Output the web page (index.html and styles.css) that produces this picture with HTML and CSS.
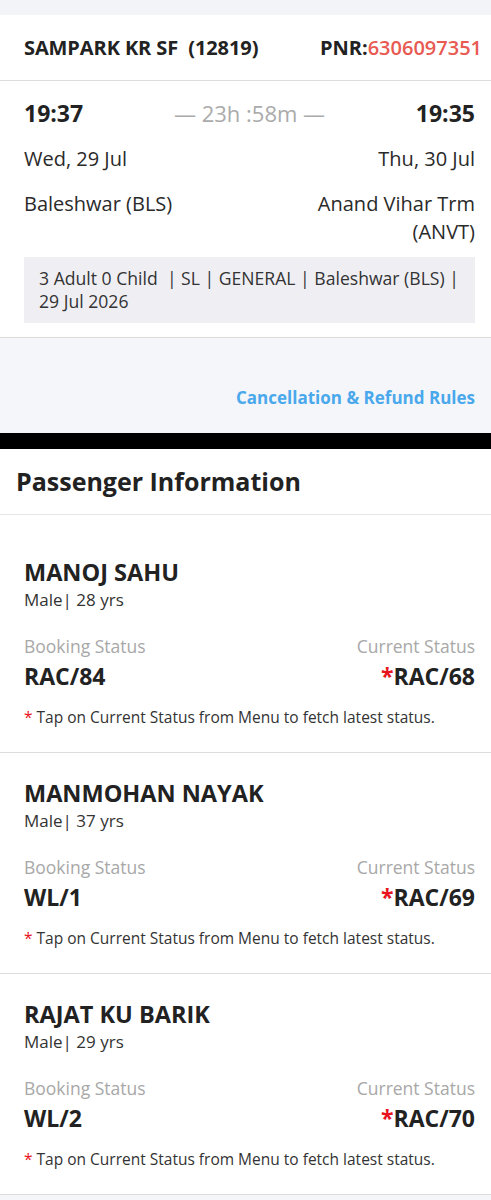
FILE: index.html
```html
<!DOCTYPE html>
<html>
<head>
<meta charset="utf-8">
<link rel="stylesheet" href="styles.css">
</head>
<body>
<div class="top-strip"></div>
<header class="train-head">
  <div class="train-name">SAMPARK KR SF&nbsp; (12819)</div>
  <div class="pnr">PNR:<span class="pnr-num">6306097351</span></div>
</header>
<section class="journey">
  <div class="row times">
    <div class="time">19:37</div>
    <div class="duration">— 23h :58m —</div>
    <div class="time">19:35</div>
  </div>
  <div class="row dates">
    <div>Wed, 29 Jul</div>
    <div class="right">Thu, 30 Jul</div>
  </div>
  <div class="row stations">
    <div>Baleshwar (BLS)</div>
    <div class="right">Anand Vihar Trm<br>(ANVT)</div>
  </div>
  <div class="summary">3 Adult 0 Child &nbsp;| SL | GENERAL | Baleshwar (BLS) | 29 Jul 2026</div>
</section>
<section class="rules">
  <a class="rules-link">Cancellation &amp; Refund Rules</a>
</section>
<div class="black-bar"></div>
<section class="passengers">
  <h2 class="pass-title">Passenger Information</h2>
  <div class="pass-list">
    <div class="pass">
      <div class="pname">MANOJ SAHU</div>
      <div class="pmeta">Male| 28 yrs</div>
      <div class="status-row">
        <div class="st">
          <div class="st-label">Booking Status</div>
          <div class="st-val">RAC/84</div>
        </div>
        <div class="st right">
          <div class="st-label">Current Status</div>
          <div class="st-val"><span class="star">*</span>RAC/68</div>
        </div>
      </div>
      <div class="note"><span class="star">*</span> Tap on Current Status from Menu to fetch latest status.</div>
    </div>
    <div class="pass">
      <div class="pname">MANMOHAN NAYAK</div>
      <div class="pmeta">Male| 37 yrs</div>
      <div class="status-row">
        <div class="st">
          <div class="st-label">Booking Status</div>
          <div class="st-val">WL/1</div>
        </div>
        <div class="st right">
          <div class="st-label">Current Status</div>
          <div class="st-val"><span class="star">*</span>RAC/69</div>
        </div>
      </div>
      <div class="note"><span class="star">*</span> Tap on Current Status from Menu to fetch latest status.</div>
    </div>
    <div class="pass">
      <div class="pname">RAJAT KU BARIK</div>
      <div class="pmeta">Male| 29 yrs</div>
      <div class="status-row">
        <div class="st">
          <div class="st-label">Booking Status</div>
          <div class="st-val">WL/2</div>
        </div>
        <div class="st right">
          <div class="st-label">Current Status</div>
          <div class="st-val"><span class="star">*</span>RAC/70</div>
        </div>
      </div>
      <div class="note"><span class="star">*</span> Tap on Current Status from Menu to fetch latest status.</div>
    </div>
  </div>
</section>
</body>
</html>
```

FILE: styles.css
```css
html, body {
  margin: 0;
  padding: 0;
}
body {
  background: #f5f6f9;
  font-family: "Open Sans", "Noto Sans", sans-serif;
  color: #222;
  width: 491px;
}
.top-strip {
  height: 15px;
  background: #f3f4f8;
}
.train-head {
  background: #fff;
  height: 66px;
  display: flex;
  align-items: center;
  justify-content: space-between;
  padding: 0 9px 0 24px;
  border-bottom: 1px solid #dcdcdc;
  box-sizing: border-box;
}
.train-name, .pnr {
  font-size: 20px;
  font-weight: 700;
  color: #222;
}
.train-name {
  letter-spacing: -0.1px;
}
.pnr-num {
  color: #e85a52;
  font-weight: 600;
}
.journey {
  background: #fff;
  padding: 17px 16px 14px 24px;
  border-bottom: 1px solid #dcdcdc;
}
.row {
  display: flex;
  justify-content: space-between;
  align-items: flex-start;
}
.right {
  text-align: right;
}
.times {
  align-items: baseline;
  line-height: 30px;
}
.time {
  font-size: 23px;
  font-weight: 700;
  color: #222;
}
.duration {
  font-size: 22px;
  color: #ababab;
}
.dates {
  margin-top: 17px;
  font-size: 20px;
  line-height: 28px;
  color: #2a2a2a;
}
.stations {
  margin-top: 17px;
  font-size: 20px;
  line-height: 28px;
  color: #2a2a2a;
}
.summary {
  margin-top: 11px;
  background: #efeff3;
  padding: 10px 2px 10px 15px;
  font-size: 17.6px;
  line-height: 23px;
  color: #333;
  font-weight: 500;
}
.rules {
  height: 95px;
  background: #f5f6f9;
  display: flex;
  justify-content: flex-end;
  align-items: flex-end;
  padding: 0 16px 24px 0;
  box-sizing: border-box;
}
.rules-link {
  color: #4aa8ec;
  font-weight: 700;
  font-size: 17px;
  line-height: 22px;
}
.black-bar {
  height: 16px;
  background: #000;
}
.passengers {
  background: #fff;
}
.pass-title {
  margin: 0;
  font-size: 25px;
  font-weight: 700;
  color: #222;
  padding: 0 16px;
  height: 66px;
  line-height: 65px;
  box-sizing: border-box;
  border-bottom: 1px solid #e6e6e6;
}
.pass-list {
  padding-top: 17px;
}
.pass {
  padding: 25px 16px 25px 24px;
  border-bottom: 1px solid #dcdcdc;
}
.pname {
  font-size: 23.5px;
  font-weight: 700;
  color: #222;
  line-height: 30px;
}
.pmeta {
  margin-top: 2px;
  font-size: 17px;
  color: #333;
  line-height: 22px;
}
.status-row {
  display: flex;
  justify-content: space-between;
  margin-top: 23px;
}
.st-label {
  font-size: 17.5px;
  color: #a8a8a8;
  line-height: 24px;
}
.st-val {
  margin-top: 4px;
  font-size: 23px;
  font-weight: 700;
  color: #222;
  line-height: 28px;
}
.star {
  color: #e8141e;
}
.note {
  margin-top: 17px;
  font-size: 15.5px;
  color: #333;
  line-height: 20px;
}
```
